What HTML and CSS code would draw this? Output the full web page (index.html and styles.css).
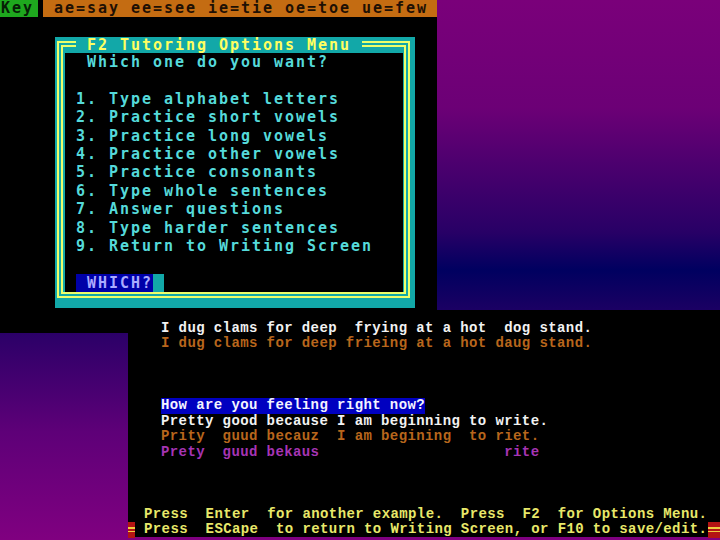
FILE: index.html
```html
<!DOCTYPE html>
<html lang="en">
<head>
<meta charset="utf-8">
<title>F2 Tutoring Options Menu</title>
<link rel="stylesheet" href="styles.css">
</head>
<body>
<div class="desk">
  <section class="win win-top">
    <div class="keybar">
      <span class="key-label">Key</span>
      <span class="key-list"> ae=say ee=see ie=tie oe=toe ue=few</span>
    </div>
    <div class="menu">
      <div class="frame">
        <div class="menu-title"> F2 Tutoring Options Menu </div>
        <div class="menu-body">
          <div class="row"> Which one do you want?</div>
          <div class="row"></div>
          <div class="row">1. Type alphabet letters</div>
          <div class="row">2. Practice short vowels</div>
          <div class="row">3. Practice long vowels</div>
          <div class="row">4. Practice other vowels</div>
          <div class="row">5. Practice consonants</div>
          <div class="row">6. Type whole sentences</div>
          <div class="row">7. Answer questions</div>
          <div class="row">8. Type harder sentences</div>
          <div class="row">9. Return to Writing Screen</div>
          <div class="row"></div>
          <div class="row"><span class="prompt"> WHICH?</span><span class="cursor"></span></div>
        </div>
      </div>
    </div>
  </section>

  <section class="win win-bottom">
    <div class="text">
      <div class="line white">I dug clams for deep  frying at a hot  dog stand.</div>
      <div class="line orange">I dug clams for deep frieing at a hot daug stand.</div>
      <div class="line"></div>
      <div class="line"></div>
      <div class="line"></div>
      <div class="line"><span class="question">How are you feeling right now?</span></div>
      <div class="line white">Pretty good because I am beginning to write.</div>
      <div class="line orange">Prity  guud becauz  I am begining  to riet.</div>
      <div class="line magenta">Prety  guud bekaus                     rite</div>
      <div class="line"></div>
      <div class="line"></div>
      <div class="line"></div>
    </div>
    <div class="keys">
      <div class="line yellow first">Press  Enter  for another example.  Press  F2  for Options Menu.</div>
      <div class="line yellow last">
        <span class="marker marker-left"></span>
        <span class="keys-text">Press  ESCape  to return to Writing Screen, or F10 to save/edit.</span>
        <span class="marker marker-right"></span>
      </div>
    </div>
  </section>
</div>
</body>
</html>
```

FILE: styles.css
```css
* {
  box-sizing: border-box;
}

html, body {
  margin: 0;
  padding: 0;
}

body {
  width: 720px;
  height: 540px;
  overflow: hidden;
  background: linear-gradient(to bottom,
    #7a007a 0%,
    #6c0076 20%,
    #4a006e 31%,
    #280066 43%,
    #000060 50%,
    #160062 56%,
    #2c0068 62%,
    #5e0078 80%,
    #800080 100%);
}

.desk {
  width: 720px;
  height: 540px;
}

.win {
  background: #000;
}

/* ---------- top window ---------- */

.win-top {
  width: 437px;
  height: 333px;
  font-family: "DejaVu Sans Mono", "Liberation Mono", monospace;
  font-weight: bold;
  font-size: 15px;
  letter-spacing: 1.97px;
}

.keybar {
  display: flex;
  height: 17px;
  line-height: 17px;
  white-space: pre;
}

.key-label {
  width: 38px;
  padding-left: 1px;
  background: #1ea81e;
  color: #062006;
}

.key-list {
  flex: 1;
  margin-left: 5px;
  background: #c46c12;
  color: #1e1004;
}

.menu {
  width: 360px;
  height: 271px;
  margin: 20px 0 0 55px;
  padding: 4px 5px 10px 2px;
  background: #12a8a8;
}

.frame {
  position: relative;
  height: 100%;
  border: 6px double #ecff6a;
  padding: 6px 1px 0 2px;
  background: #12a8a8;
}

.menu-title {
  position: absolute;
  left: 13px;
  top: -10px;
  height: 16px;
  line-height: 16px;
  white-space: pre;
  background: #12a8a8;
  color: #ffff60;
}

.menu-body {
  height: 100%;
  padding-left: 11px;
  background: #000;
  color: #55dada;
}

.row {
  height: 18.4px;
  line-height: 18.4px;
  white-space: pre;
}

.prompt {
  display: inline-block;
  height: 18.4px;
  vertical-align: top;
  background: #0000a8;
  color: #aaaaff;
}

.cursor {
  display: inline-block;
  width: 11px;
  height: 18.4px;
  vertical-align: top;
  background: #12a8a8;
}

/* ---------- bottom window ---------- */

.win-bottom {
  width: 592px;
  height: 227px;
  margin: -23px 0 0 128px;
  padding-top: 10.75px;
  font-family: "Liberation Mono", "DejaVu Sans Mono", monospace;
  font-weight: bold;
  font-size: 14px;
  letter-spacing: 0.4px;
}

.text {
  padding-left: 33px;
}

.line {
  height: 15.5px;
  line-height: 15.5px;
  white-space: pre;
}

.white {
  color: #f2f2f2;
}

.orange {
  color: #b8661c;
}

.magenta {
  color: #a634b4;
}

.yellow {
  color: #e8e86a;
}

.question {
  display: inline-block;
  height: 15.5px;
  background: #0000c0;
  color: #f4f4ff;
}

.keys .first {
  padding-left: 16px;
}

.keys .last {
  display: flex;
  align-items: stretch;
  height: 15.5px;
}

.keys-text {
  flex: 1;
  margin-left: 9px;
}

.marker {
  display: block;
  height: 15.5px;
  background: linear-gradient(to bottom,
    #b41414 0 5px,
    #f0cc40 5px 6.8px,
    #b41414 6.8px 8.6px,
    #f0cc40 8.6px 10.4px,
    #b41414 10.4px 100%);
}

.marker-left {
  width: 7px;
}

.marker-right {
  width: 12px;
}
```
